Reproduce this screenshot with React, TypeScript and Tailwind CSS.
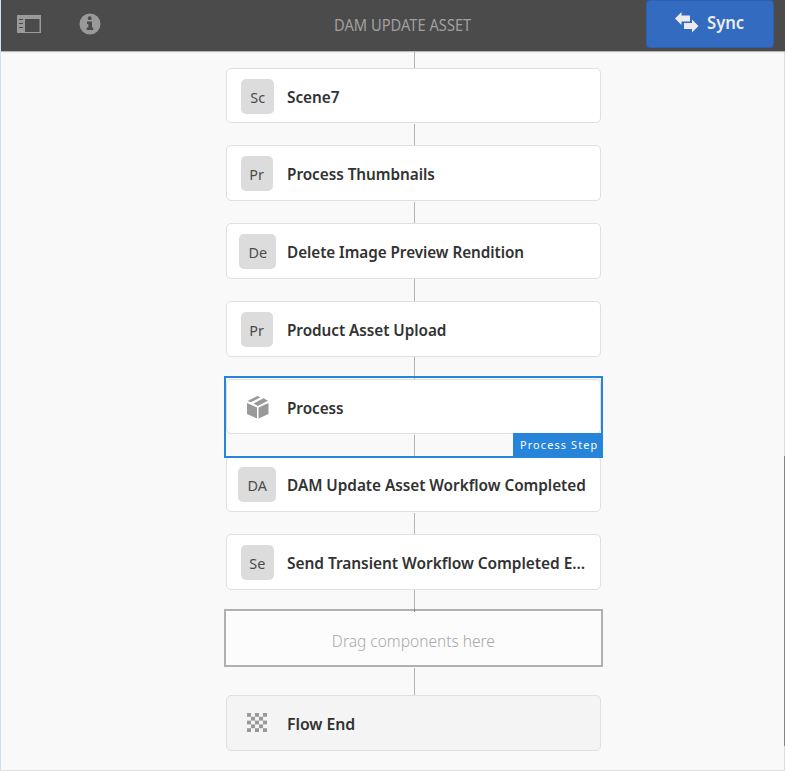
type Step = {
  code?: string;
  badge?: string;
  label: string;
  scale: string;
  height: string;
  line: string;
  selected?: boolean;
};

const steps: Step[] = [
  { code: "Sc", badge: "w-[33px]", label: "Scene7", scale: "scale-x-[0.932]", height: "h-[55px]", line: "h-[22px] pt-px" },
  { code: "Pr", badge: "w-8 -ml-px", label: "Process Thumbnails", scale: "scale-x-[0.93]", height: "h-14", line: "h-[22px] pt-px" },
  { code: "De", badge: "w-[37px]", label: "Delete Image Preview Rendition", scale: "scale-x-[0.925]", height: "h-14", line: "h-[22px]" },
  { code: "Pr", badge: "w-8 -ml-px", label: "Product Asset Upload", scale: "scale-x-[0.928]", height: "h-14", line: "h-[22px]" },
  { label: "Process", scale: "scale-x-[0.928]", height: "h-[55px]", line: "h-[22px] pt-px", selected: true },
  { code: "DA", badge: "w-[38px] -ml-px", label: "DAM Update Asset Workflow Completed", scale: "scale-x-[0.931]", height: "h-14", line: "h-[22px] pt-px" },
  { code: "Se", badge: "w-[33px]", label: "Send Transient Workflow Completed E…", scale: "scale-x-[0.938]", height: "h-14", line: "h-[19px]" },
];

function RailIcon() {
  return (
    <svg width="24" height="18" viewBox="0 0 24 18" className="block">
      <path fill="#999" fillRule="evenodd" d="M0 0h24v18H0zM8 4v13h14.500V4z" />
      <path fill="#4b4b4b" d="M2 4h4v1H2zM2 8h4v1H2zM2 12h4v1H2z" />
    </svg>
  );
}

function InfoIcon() {
  return (
    <svg width="22" height="22" viewBox="0 0 22 22" className="block">
      <circle cx="11" cy="11" r="10.5" fill="#999" />
      <circle cx="10.7" cy="5.2" r="1.9" fill="#4b4b4b" />
      <path fill="#4b4b4b" d="M8 8.500h5v6h1.200V17H7.700v-2.500H9.300v-3.500H8z" />
    </svg>
  );
}

function SyncIcon() {
  return (
    <svg width="24" height="21" viewBox="0 0 24 21" className="block">
      <path fill="#ececec" d="M0 6.500 6.500 0v3.500H15v6H6.500V13z" />
      <path fill="#ececec" d="M23.500 14 17 20.500V17H9v-6h8V7.500z" />
    </svg>
  );
}

function BoxIcon() {
  return (
    <svg width="22" height="23" viewBox="0 0 22 23" className="block">
      <g fill="#999">
        <path d="M0 7 10 11.500V22.500L0 18z" />
        <path d="M11.500 11.500 21.500 7V18L11.500 22.500z" />
        <path d="M0.500 5 10.500 0 13.500 1.200 4 6.300z" />
        <path d="M6.500 7.500 16.500 2.300 21 4.800 10.800 10z" />
      </g>
    </svg>
  );
}

function CheckerIcon() {
  const cells = [0, 1, 2, 3, 4].flatMap((r) =>
    [0, 1, 2, 3, 4].filter((c) => (r + c) % 2 === 0).map((c) => [r, c]),
  );
  return (
    <svg width="20" height="19" viewBox="0 0 20 19" className="block">
      {cells.map(([r, c]) => (
        <rect key={`${r}-${c}`} x={c * 4} y={r * 3.8} width="4" height="3.8" fill="#999" />
      ))}
    </svg>
  );
}

function Connector({ className }: { className: string }) {
  return (
    <div className={`${className} ml-[188px] w-px shrink-0`}>
      <div className="h-full w-px bg-[#b3b3b3]" />
    </div>
  );
}

function StepRow({ step }: { step: Step }) {
  return (
    <div className="relative shrink-0">
      <div className={`${step.height} flex items-start rounded-[5px] border border-[#e0e0e0] bg-white`}>
        <div className="mt-[10px] flex w-[61px] shrink-0 justify-center">
          {step.code ? (
            <span className={`${step.badge} flex h-[35px] items-center justify-center rounded-[5px] bg-[#dcdcdc] pt-[2px] text-[15px] text-[#4b4b4b]`}>
              <span className="scale-x-[0.96]">{step.code}</span>
            </span>
          ) : (
            <span className="mt-[6px]"><BoxIcon /></span>
          )}
        </div>
        <span className={`${step.scale} mt-4 -ml-px w-[290px] origin-left whitespace-nowrap text-[16.500px] leading-6 font-semibold tracking-[-0.05px] text-[#323232]`}>{step.label}</span>
      </div>
      <Connector className={step.line} />
      {step.selected && (
        <div className="absolute -top-[3px] -left-[2px] z-10 flex h-[82px] w-[379px] items-end justify-end border-2 border-[#2684db]">
          <div className="-mr-[2px] -mb-[2px] flex h-[25px] w-[90px] items-center bg-[#2684db] pb-[2px] pl-[7px] text-[11.500px] tracking-[1.2px] whitespace-nowrap text-white">
            <span className="origin-left scale-x-[0.945]">Process Step</span>
          </div>
        </div>
      )}
    </div>
  );
}

export default function App() {
  return (
    <div className="flex h-[771px] w-[785px] overflow-hidden border-b border-l border-b-[#e1e1e1] border-l-[#d3e0ee] bg-[#f9f9f9] font-['Noto_Sans','Open_Sans',sans-serif]">
      <div className="flex w-[784px] flex-col">
        <header className="z-10 flex h-[51px] w-full shrink-0 items-start bg-[#4b4b4b] shadow-[0_1px_1px_#b8b8b8]">
          <div className="mt-[15px] ml-4"><RailIcon /></div>
          <div className="mt-[13px] ml-[38px]"><InfoIcon /></div>
          <h1 className="mt-[12.500px] ml-[233px] w-[140px] origin-left scale-x-[0.947] text-[15.500px] leading-6 whitespace-nowrap text-[#a0a0a0]">DAM UPDATE ASSET</h1>
          <button className="ml-[172px] flex h-12 w-32 items-start rounded-[4px] border border-[#2b62b2] bg-[#326bbf] text-[#ececec]">
            <span className="mt-[11px] ml-[28px]"><SyncIcon /></span>
            <span className="mt-[9px] ml-[8px] origin-left scale-x-[0.95] text-[17.500px] leading-6 font-semibold">Sync</span>
          </button>
        </header>
        <div className="flex min-h-0 flex-1 justify-between">
          <main className="ml-[225px] flex w-[375px] flex-col">
            <Connector className="h-[17px]" />
            {steps.map((step, i) => (
              <StepRow key={i} step={step} />
            ))}
            <div className="relative -ml-[2px] flex h-[58px] w-[379px] shrink-0 items-center justify-center border-2 border-[#b0b0b0] bg-[#fcfcfc] pt-[5px] text-[17px] font-light text-[#a8a8a8]">
              <span className="absolute -top-[2px] left-[188px] h-[3px] w-px bg-[#888]" />
              <span className="scale-x-[0.912]">Drag components here</span>
            </div>
            <Connector className="h-7 pt-px" />
            <div className="flex h-14 shrink-0 items-start rounded-[5px] border border-[#e0e0e0] bg-[#f4f4f4]">
              <div className="mt-[17px] ml-5"><CheckerIcon /></div>
              <span className="mt-4 ml-5 origin-left scale-x-[0.96] text-[16.500px] leading-6 font-semibold tracking-[-0.05px] text-[#323232]">Flow End</span>
            </div>
          </main>
          <div className="flex w-px flex-col bg-[#dedede] pt-[405px]">
            <div className="h-[290px] w-px bg-[#858585]" />
          </div>
        </div>
      </div>
    </div>
  );
}
